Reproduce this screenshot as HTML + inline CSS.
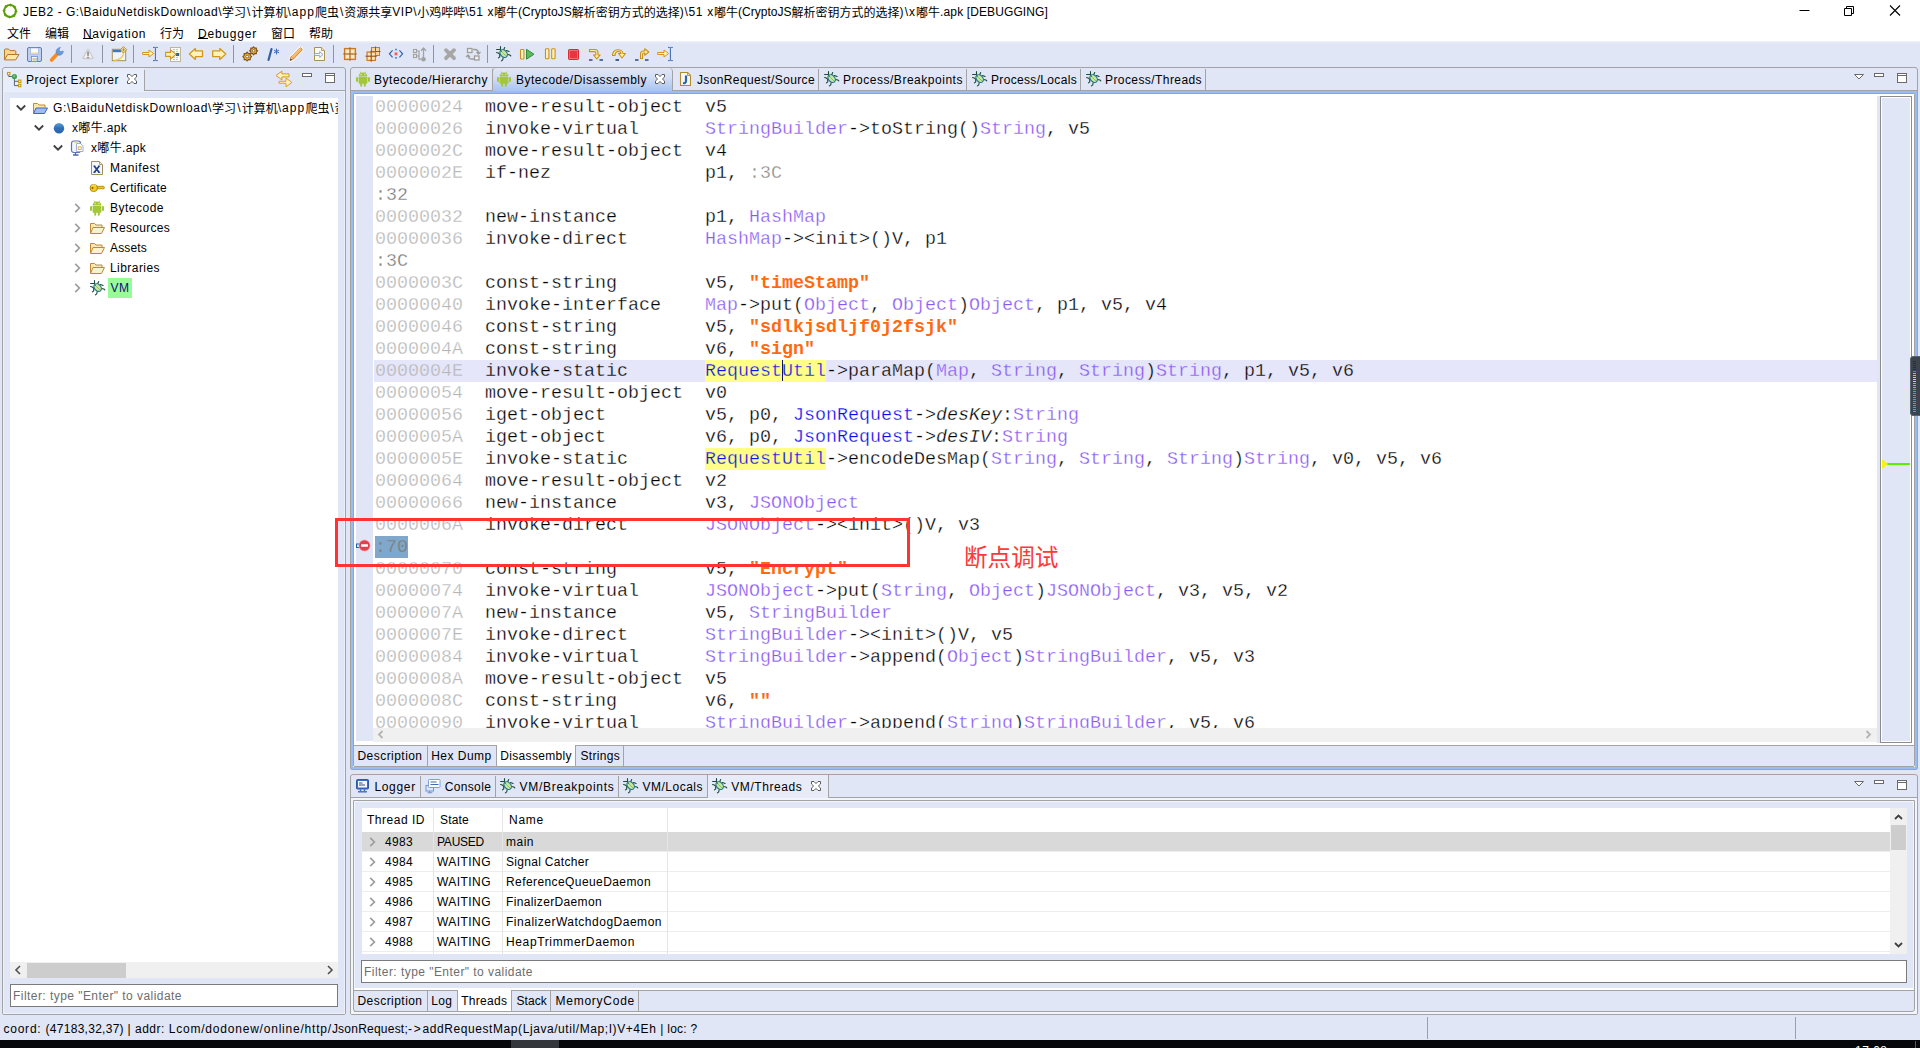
<!DOCTYPE html>
<html lang="zh"><head><meta charset="utf-8"><title>JEB2</title>
<style>
html,body{margin:0;padding:0;}
body{width:1920px;height:1048px;overflow:hidden;position:relative;background:#E1E6F6;font-family:"Liberation Sans","Noto Sans CJK SC",sans-serif;font-size:12px;color:#000;}
.a{position:absolute;}
.t{position:absolute;white-space:pre;line-height:20px;height:20px;}
.ic{position:absolute;width:16px;height:16px;overflow:visible;}
.sep{position:absolute;top:45px;width:1px;height:18px;background:#8F94A3;}
.code{position:absolute;white-space:pre;font-family:"Liberation Mono","Noto Sans CJK SC",monospace;font-size:18.333px;line-height:22px;height:22px;left:0;}
.ad{color:#B6B6B6;}
.lb{color:#787878;}
.cl{color:#8858F4;}
.st{color:#FF6A10;font-weight:bold;}
.bl{color:#0808F0;}
.it{font-style:italic;}
.hl{background:#FFFF88;color:#1010F0;padding-top:1px;}
.tabb{position:absolute;top:68px;height:22px;border-right:1px solid #A3A3A3;box-sizing:border-box;}
.lb2{color:#8A8A8A;}
.sel{background:#7FA8CC;color:#7C7C76;display:inline-block;height:22px;margin-top:-2px;padding-top:1px;box-sizing:border-box;}
.caret{display:inline-block;width:1px;margin-right:-1px;height:21px;vertical-align:top;background:#101040;}
.code{-webkit-text-stroke:.3px #fff;}
.code.cur{-webkit-text-stroke-color:#E6E6FA;}
.code .hl{-webkit-text-stroke-color:#FFFF88;}
.code .sel{-webkit-text-stroke-color:#7FA8CC;}
.code .st{-webkit-text-stroke:0;}

</style></head><body>
<div class="a" style="left:0;top:0;width:1920px;height:41px;background:#fff"></div>
<svg class="ic" style="left:2px;top:3px;width:16px;height:16px" viewBox="0 0 16 16"><circle cx="8" cy="8" r="5.900" fill="none" stroke="#5A9E0A" stroke-width="2"/><path d="M8 .8l1.200 2.400M15.200 8l-2.400 1.200M8 15.200L6.800 12.800M.8 8l2.400-1.200M2.900 2.900l2.500.9M13.100 2.900l-.9 2.500M13.100 13.100l-2.500-.9M2.900 13.100l.9-2.500" stroke="#5A9E0A" stroke-width="1.800"/></svg>
<span id="t0" class="t " style="left:23px;top:2px;font-size:12px;color:#000;letter-spacing:0.524px;">JEB2 - G:\BaiduNetdiskDownload\</span><span id="t1" class="t " style="left:222px;top:3px;font-size:12px;color:#000;">学习</span><span id="t2" class="t " style="left:246px;top:2px;font-size:12px;color:#000;padding-left:1.078px;">\</span><span id="t3" class="t " style="left:251.5px;top:3px;font-size:12px;color:#000;">计算机</span><span id="t4" class="t " style="left:287.5px;top:2px;font-size:12px;color:#000;letter-spacing:1.035px;">\app</span><span id="t5" class="t " style="left:315px;top:3px;font-size:12px;color:#000;">爬虫</span><span id="t6" class="t " style="left:339px;top:2px;font-size:12px;color:#000;padding-left:0.978px;">\</span><span id="t7" class="t " style="left:344.3px;top:3px;font-size:12px;color:#000;">资源共享</span><span id="t8" class="t " style="left:392.3px;top:2px;font-size:12px;color:#000;letter-spacing:0.553px;">VIP\</span><span id="t9" class="t " style="left:417.2px;top:3px;font-size:12px;color:#000;">小鸡哔哔</span><span id="t10" class="t " style="left:465.2px;top:2px;font-size:12px;color:#000;letter-spacing:0.557px;">\51 x</span><span id="t11" class="t " style="left:494px;top:3px;font-size:12px;color:#000;">嘟牛</span><span id="t12" class="t " style="left:518px;top:2px;font-size:12px;color:#000;letter-spacing:0.040px;">(CryptoJS</span><span id="t13" class="t " style="left:571.7px;top:3px;font-size:12px;color:#000;">解析密钥方式的选择</span><span id="t14" class="t " style="left:679.7px;top:2px;font-size:12px;color:#000;letter-spacing:0.697px;">)\51 x</span><span id="t15" class="t " style="left:713.9px;top:3px;font-size:12px;color:#000;">嘟牛</span><span id="t16" class="t " style="left:737.9px;top:2px;font-size:12px;color:#000;letter-spacing:0.040px;">(CryptoJS</span><span id="t17" class="t " style="left:791.6px;top:3px;font-size:12px;color:#000;">解析密钥方式的选择</span><span id="t18" class="t " style="left:899.6px;top:2px;font-size:12px;color:#000;letter-spacing:1.052px;">)\x</span><span id="t19" class="t " style="left:916.1px;top:3px;font-size:12px;color:#000;">嘟牛</span><span id="t20" class="t " style="left:940.1px;top:2px;font-size:12px;color:#000;letter-spacing:0.117px;">.apk [DEBUGGING]</span>
<svg class="a" style="left:1780px;top:0;width:140px;height:22px" viewBox="0 0 140 22"><path d="M19.500 10.500h10" stroke="#000" stroke-width="1"/><path d="M64.500 8.500h7v7h-7zM66.500 8.500v-2h7v7h-2" fill="none" stroke="#000" stroke-width="1"/><path d="M110 5.500l10 10M120 5.500l-10 10" stroke="#000" stroke-width="1.100"/></svg>
<span id="t21" class="t " style="left:7px;top:24px;font-size:12px;color:#000;letter-spacing:-0.008px;">文件</span>
<span id="t22" class="t " style="left:45px;top:24px;font-size:12px;color:#000;letter-spacing:-0.008px;">编辑</span>
<span id="t23" class="t " style="left:83px;top:23.5px;font-size:12px;color:#000;letter-spacing:0.630px;">Navigation</span>
<span id="t24" class="t " style="left:160px;top:24px;font-size:12px;color:#000;letter-spacing:-0.008px;">行为</span>
<span id="t25" class="t " style="left:198px;top:23.5px;font-size:12px;color:#000;letter-spacing:0.785px;">Debugger</span>
<span id="t26" class="t " style="left:271px;top:24px;font-size:12px;color:#000;letter-spacing:-0.008px;">窗口</span>
<span id="t27" class="t " style="left:309px;top:24px;font-size:12px;color:#000;letter-spacing:-0.008px;">帮助</span>
<div class="a" style="left:83px;top:38px;width:10px;height:1px;background:#000"></div>
<div class="a" style="left:198px;top:38px;width:10px;height:1px;background:#000"></div>
<div class="a" style="left:0;top:41px;width:1920px;height:27px;background:linear-gradient(#F4F6FC 0,#E1E6F6 2px)"></div>
<svg class="ic" style="left:3px;top:46px;width:16px;height:16px" viewBox="0 0 16 16"><path d="M1.500 13.500V4c0-.6.400-1 1-1h3l1.500 1.600h4.800c.6 0 1 .4 1 1v2.600" fill="#F7D78C" stroke="#B5772B"/><path d="M1.500 13.900L4.600 8.500H16l-3.400 5.400z" fill="#FBE6AE" stroke="#B5772B" stroke-linejoin="round"/></svg>
<svg class="ic" style="left:26px;top:46px;width:16px;height:16px" viewBox="0 0 16 16"><rect x="1.500" y="1.500" width="14" height="14" rx="1.500" fill="#BDD0EE" stroke="#5C7FB8"/><rect x="4.500" y="2" width="8" height="6" fill="#F8FAFD" stroke="#8FA8D4" stroke-width=".6"/><rect x="4.800" y="6.600" width="7.400" height="1.200" fill="#EBD3A0"/><rect x="5.500" y="10.500" width="6" height="5" fill="#F4F7FC" stroke="#6E8FC8" stroke-width=".8"/><rect x="6.500" y="12" width="2.600" height="2.600" fill="#E6C888"/><rect x="9.600" y="12" width="1" height="2.600" fill="#7E9ED2"/></svg>
<svg class="ic" style="left:49px;top:46px;width:16px;height:16px" viewBox="0 0 16 16"><path d="M2.600 14L8.600 7.600" stroke="#F98A1C" stroke-width="3.600" stroke-linecap="round"/><path d="M7.400 7.200c-1-2.400.6-5.400 4-5.800l-1.500 2.500 1.400 1.800 2.900-.7c.3 2.900-2.500 4.900-4.900 4z" fill="#6A9AD4" stroke="#4E82C4" stroke-width=".6"/></svg>
<svg class="ic" style="left:80px;top:46px;width:16px;height:16px" viewBox="0 0 16 16"><path d="M8 4L12.600 12H3.400z" fill="#EFEFEF" stroke="#CDCDCD" stroke-width="2.400" stroke-linejoin="round"/><path d="M8 4.300L12.300 11.800H3.700z" fill="#EFEFEF"/><rect x="7.200" y="5.600" width="1.700" height="4.200" fill="#8E8E8E"/><rect x="7.200" y="10.800" width="1.700" height="1.600" fill="#8E8E8E"/></svg>
<svg class="ic" style="left:111px;top:46px;width:16px;height:16px" viewBox="0 0 16 16"><rect x="1.300" y="3.300" width="13.400" height="11.400" fill="#EEF5FD" stroke="#A8915A"/><rect x="1.800" y="3.800" width="8.500" height="2.400" fill="#3F78C8"/><path d="M3 14.300C9 14.300 12.500 11 12.500 6.500" stroke="#F2C84B" stroke-width="1.300" fill="none"/><path d="M12.500 .6L15.600 3.800 12.500 7 9.400 3.800z" fill="#FDEBA8" stroke="#B8860B" stroke-width=".9" stroke-linejoin="round"/><path d="M12.500 2.200v3.200M10.900 3.800h3.200" stroke="#B8860B" stroke-width=".8"/></svg>
<svg class="ic" style="left:142px;top:46px;width:16px;height:16px" viewBox="0 0 16 16"><path d="M.6 6.500H7V4L11.600 7.500 7 11V8.500H.6z" fill="#FFF4C4" stroke="#D4951E" stroke-width="1" stroke-linejoin="round"/><path d="M11 1.400H12.600Q13.400 1.400 13.400 2.400V13.600Q13.400 14.600 12.600 14.600H11M15.800 1.400H14.200Q13.400 1.400 13.400 2.400M15.800 14.600H14.200Q13.400 14.600 13.400 13.600" stroke="#3A66B0" stroke-width="1" fill="none"/></svg>
<svg class="ic" style="left:165px;top:46px;width:16px;height:16px" viewBox="0 0 16 16"><rect x="5.500" y="1.500" width="10" height="14" fill="#FBFBF8" stroke="#BDB89C"/><path d="M8 3.500h6M8 5.500h6M8 11.500h6M8 13.500h6" stroke="#B4C6E4" stroke-width="1" stroke-dasharray="2 1"/><rect x="11" y="7" width="3.200" height="3" fill="#2F5FA8"/><path d="M.6 6.400H5.500V3.800L11 8.400 5.500 13V10.400H.6z" fill="#FFF0B0" stroke="#D4951E" stroke-width="1.100" stroke-linejoin="round"/></svg>
<svg class="ic" style="left:188px;top:46px;width:16px;height:16px" viewBox="0 0 16 16"><path d="M1.400 8L7.400 2.600V4.900H14.500V10.600H7.400V13.400z" fill="#FFF3B8" stroke="#D4951E" stroke-width="1.300" stroke-linejoin="round"/></svg>
<svg class="ic" style="left:211px;top:46px;width:16px;height:16px" viewBox="0 0 16 16"><path d="M14.800 8L8.800 2.600V4.900H1.700V10.600H8.800V13.400z" fill="#FFF3B8" stroke="#D4951E" stroke-width="1.300" stroke-linejoin="round"/></svg>
<svg class="ic" style="left:242px;top:46px;width:16px;height:16px" viewBox="0 0 16 16"><polygon points="9.60,10.60 8.13,11.81 8.31,13.71 6.41,13.53 5.20,15.00 3.99,13.53 2.09,13.71 2.27,11.81 0.80,10.60 2.27,9.39 2.09,7.49 3.99,7.67 5.20,6.20 6.41,7.67 8.31,7.49 8.13,9.39" fill="#EDBA42" stroke="#7E4E14" stroke-width="1.100" stroke-linejoin="round"/><circle cx="5.2" cy="10.6" r="1.408" fill="#FFFFFF" stroke="#7E4E14" stroke-width=".8"/><polygon points="15.60,4.80 14.26,5.90 14.43,7.63 12.70,7.46 11.60,8.80 10.50,7.46 8.77,7.63 8.94,5.90 7.60,4.80 8.94,3.70 8.77,1.97 10.50,2.14 11.60,0.80 12.70,2.14 14.43,1.97 14.26,3.70" fill="#EDBA42" stroke="#7E4E14" stroke-width="1.100" stroke-linejoin="round"/><circle cx="11.6" cy="4.8" r="1.28" fill="#FFFFFF" stroke="#7E4E14" stroke-width=".8"/></svg>
<svg class="ic" style="left:265px;top:46px;width:16px;height:16px" viewBox="0 0 16 16"><path d="M3.500 14L6.500 3" stroke="#34609E" stroke-width="2.200" stroke-linecap="round"/><path d="M11.500 2.600v5.800M9 4.100l5 2.800M14 4.100L9 6.900" stroke="#3A6AB8" stroke-width="1"/></svg>
<svg class="ic" style="left:288px;top:46px;width:16px;height:16px" viewBox="0 0 16 16"><path d="M2 14.500l1.200-3.800L11.800 2c.8-.8 3 1.200 2.200 2.200L5.500 13z" fill="#fff" stroke="#fff" stroke-width="2.600" stroke-linejoin="round"/><path d="M2 14.500l1.200-3.800L11.800 2c.8-.8 3 1.200 2.200 2.200L5.500 13z" fill="#F6B568" stroke="#C07A2A" stroke-width=".9" stroke-linejoin="round"/><path d="M4 10.600L12.400 2.200" stroke="#FAD9A8" stroke-width="1"/><path d="M2 14.500l1.200-3.800 2.300 2.300z" fill="#E8D2B0" stroke="#C07A2A" stroke-width=".5"/><path d="M2 14.500l.7-2 1.300 1.300z" fill="#1B2A6B"/></svg>
<svg class="ic" style="left:311px;top:46px;width:16px;height:16px" viewBox="0 0 16 16"><path d="M3.5 1.5h7l3 3v10h-10z" fill="#FBFAF2" stroke="#A8904E" stroke-linejoin="round"/><path d="M10.5 1.5v3h3" fill="#F0E7C0" stroke="#A8904E" stroke-width=".8"/><path d="M3.5 7.5h5.2V5.6L12 8.5 8.700 11.400V9.500H3.500z" fill="#F3F6FB" stroke="#8AA2C8" stroke-width=".9" stroke-linejoin="round"/></svg>
<svg class="ic" style="left:342px;top:46px;width:16px;height:16px" viewBox="0 0 16 16"><rect x="2.500" y="2.500" width="11" height="11" fill="#F1C88C" stroke="#C77B2B" stroke-width="1.200"/><rect x="4" y="4" width="3" height="3" fill="#FBEBC8"/><rect x="9" y="4" width="3" height="3" fill="#FBEBC8"/><rect x="4" y="9" width="3" height="3" fill="#FBEBC8"/><rect x="9" y="9" width="3" height="3" fill="#FBEBC8"/><path d="M8 1.200v13.600M1.200 8h13.600" stroke="#9A5A24" stroke-width=".9"/></svg>
<svg class="ic" style="left:365px;top:46px;width:16px;height:16px" viewBox="0 0 16 16"><rect x="6.500" y="1.500" width="8" height="8" fill="#F5D6A2" stroke="#C77B2B" stroke-width="1"/><path d="M10.500 .5v10M5.500 5.500h10" stroke="#8E4A1C" stroke-width=".9"/><rect x="2" y="6" width="8.500" height="8.500" fill="#F1C88C" stroke="#C77B2B" stroke-width="1.100"/><rect x="3.200" y="7.200" width="2.400" height="2.400" fill="#FBEBC8"/><rect x="7" y="7.200" width="2.400" height="2.400" fill="#FBEBC8"/><rect x="3.200" y="11" width="2.400" height="2.400" fill="#FBEBC8"/><rect x="7" y="11" width="2.400" height="2.400" fill="#FBEBC8"/><path d="M6.200 4.500v11.200M.5 10.200h11.300" stroke="#8E4A1C" stroke-width="1"/></svg>
<svg class="ic" style="left:388px;top:46px;width:16px;height:16px" viewBox="0 0 16 16"><path d="M4.600 4.300L1.400 7.800l3.200 3.500M11.400 4.300l3.200 3.500-3.200 3.500" fill="none" stroke="#2F64B4" stroke-width="1.200"/><rect x="6.600" y="6.400" width="2.800" height="2.800" fill="#EE5A5A" stroke="#F7B0B0" stroke-width=".5"/><path d="M8 2.300l1.400 2H6.600zM8 13.300l1.400-2H6.600z" fill="#2E7FD0"/></svg>
<svg class="ic" style="left:411px;top:46px;width:16px;height:16px" viewBox="0 0 16 16"><path d="M12.500 12V2.200M10 4.800l2.500-2.800L15 4.800" fill="none" stroke="#A2A2A2" stroke-width="1.300"/><circle cx="12.500" cy="13.200" r="2.300" fill="#A2A2A2"/><rect x="2.500" y="3.500" width="3" height="3" fill="#F2F2F2" stroke="#A2A2A2" stroke-width="1.200"/><rect x="2.500" y="8.500" width="3" height="3" fill="#F2F2F2" stroke="#A2A2A2" stroke-width="1.200"/><path d="M5.500 5h2.500v8.200h2.500M5.500 10h2.500" fill="none" stroke="#A2A2A2" stroke-width="1.200"/></svg>
<svg class="ic" style="left:442px;top:46px;width:16px;height:16px" viewBox="0 0 16 16"><path d="M4 4.200l8 8M12 4.200l-8 8" stroke="#A6A6A6" stroke-width="3.800" stroke-linecap="round"/></svg>
<svg class="ic" style="left:465px;top:46px;width:16px;height:16px" viewBox="0 0 16 16"><rect x="2.500" y="2.500" width="4.500" height="4" fill="#F0F0F0" stroke="#9E9E9E" stroke-width="1.300"/><rect x="9.500" y="10" width="4.500" height="4" fill="#F0F0F0" stroke="#9E9E9E" stroke-width="1.300"/><path d="M8 3.500h2c2.200 0 3.500 1.600 3.500 4M11.500 6l2 2 2-2M9 13H6.500C4.300 13 3 11.400 3 9M1 11l2-2 2 2" fill="none" stroke="#9E9E9E" stroke-width="1.300"/></svg>
<svg class="ic" style="left:496px;top:46px;width:16px;height:16px" viewBox="0 0 16 16"><g stroke="#1E4A3A" stroke-width="1.100" fill="none" stroke-linecap="round"><path d="M4.500 .6v3.400M8.700 1.600L7.700 3.800M.6 3.500h3.400M.6 6.500l1.600.5 1.400 1M3.700 8.200v2.800l-1.300.9M10.500 4.500l2.600 1M11.500 8.500l2.400.5.900.9M7.200 11.500l-.5 2.400-1.300 1"/></g><ellipse cx="7.600" cy="7.600" rx="3.200" ry="4.300" transform="rotate(-42 7.600 7.600)" fill="#C6E79C" stroke="#1F6F8C" stroke-width="1.100"/><path d="M6.200 6.200l3.800 3.800" stroke="#7DB860" stroke-width=".8"/><circle cx="5.400" cy="5.200" r=".7" fill="#2E8B2E"/></svg>
<svg class="ic" style="left:519px;top:46px;width:16px;height:16px" viewBox="0 0 16 16"><rect x="1.500" y="3.500" width="3.400" height="9.500" rx=".8" fill="#FFF4C0" stroke="#C8901A" stroke-width="1.100"/><path d="M7.500 3.300V13.200L15 8.250z" fill="#5DBB5B" stroke="#2F8F3E" stroke-width="1" stroke-linejoin="round"/></svg>
<svg class="ic" style="left:542px;top:46px;width:16px;height:16px" viewBox="0 0 16 16"><rect x="3.500" y="2.800" width="3.400" height="10" rx=".8" fill="#FFF4C0" stroke="#C8901A" stroke-width="1.100"/><rect x="9.700" y="2.800" width="3.400" height="10" rx=".8" fill="#FFF4C0" stroke="#C8901A" stroke-width="1.100"/></svg>
<svg class="ic" style="left:565px;top:46px;width:16px;height:16px" viewBox="0 0 16 16"><rect x="3.500" y="3.500" width="10" height="10" rx=".8" fill="#EB3440" stroke="#D92A34" stroke-width="1"/><rect x="4.500" y="4.500" width="8" height="8" fill="none" stroke="#F2747C" stroke-width=".9"/></svg>
<svg class="ic" style="left:588px;top:46px;width:16px;height:16px" viewBox="0 0 16 16"><path d="M1.500 3.500h5.500c2 0 3 1 3 3V9h2.200L8.800 12.800 5.500 9h2.300V6.800c0-.8-.4-1.200-1.200-1.200H1.500z" fill="#FFF0A8" stroke="#C8901A" stroke-width="1.100" stroke-linejoin="round"/><path d="M1 14h3.500M11.500 14H15" stroke="#2A4A80" stroke-width="1.700"/></svg>
<svg class="ic" style="left:611px;top:46px;width:16px;height:16px" viewBox="0 0 16 16"><path d="M1.500 9.500C1.500 3 11 1.500 12 7.500h2.500L11 12 7.500 7.500H10c-.8-3.200-6-2.600-6 2z" fill="#FFF0A8" stroke="#C8901A" stroke-width="1.100" stroke-linejoin="round"/><path d="M4.500 14H8" stroke="#2A4A80" stroke-width="1.700"/></svg>
<svg class="ic" style="left:634px;top:46px;width:16px;height:16px" viewBox="0 0 16 16"><path d="M6.500 12.500V8c0-2 1-3 3-3h1.200V2.800L14.800 6l-4.100 3.200V7H9.700C9 7 8.600 7.400 8.600 8.200v4.300z" fill="#FFF0A8" stroke="#C8901A" stroke-width="1.100" stroke-linejoin="round"/><path d="M1 14h3.500M11 14h3.500" stroke="#2A4A80" stroke-width="1.700"/></svg>
<svg class="ic" style="left:657px;top:46px;width:16px;height:16px" viewBox="0 0 16 16"><path d="M.6 6.500H7V4L11.600 7.500 7 11V8.500H.6z" fill="#FFF4C4" stroke="#D4951E" stroke-width="1" stroke-linejoin="round"/><path d="M11 1.400H12.600Q13.400 1.400 13.400 2.400V13.600Q13.400 14.600 12.600 14.600H11M15.800 1.400H14.200Q13.400 1.400 13.400 2.400M15.800 14.600H14.200Q13.400 14.600 13.400 13.600" stroke="#3A66B0" stroke-width="1" fill="none"/></svg>
<div class="sep" style="left:71px"></div>
<div class="sep" style="left:102px"></div>
<div class="sep" style="left:133px"></div>
<div class="sep" style="left:233px"></div>
<div class="sep" style="left:333px"></div>
<div class="sep" style="left:433px"></div>
<div class="sep" style="left:487px"></div>
<div class="a" style="left:2px;top:67px;width:344px;height:948px;border:1px solid #A3A3A3;border-radius:3px 3px 2px 2px;box-sizing:border-box;background:#E1E6F6"></div>
<div class="a" style="left:144px;top:90px;width:201px;height:1px;background:#A3A3A3"></div>
<div class="a" style="left:144px;top:70px;width:1px;height:21px;background:#A3A3A3"></div>
<div class="a" style="left:3px;top:91px;width:342px;height:923px;border:1px solid #EAF0FC;box-sizing:border-box"></div>
<div class="a" style="left:3px;top:68px;width:141px;height:23px;background:#E8EDFB;border-radius:3px 0 0 0"></div>
<svg class="ic" style="left:7px;top:71px;width:16px;height:16px" viewBox="0 0 16 16"><path d="M1.700 4v1.500h3.500M7.400 8v6.600h4M7.400 10.300h4" fill="none" stroke="#5C6578" stroke-width="1"/><rect x=".5" y="1.500" width="2.400" height="2.400" fill="#fff" stroke="#C8981E" stroke-width="1.100"/><circle cx="7.400" cy="5.500" r="2.600" fill="#45A055"/><circle cx="7.200" cy="5.200" r="1.100" fill="#7CC686"/><rect x="11.500" y="9.100" width="2.400" height="2.400" fill="#fff" stroke="#C8981E" stroke-width="1.100"/><rect x="11.500" y="13.300" width="2.400" height="2.400" fill="#fff" stroke="#C8981E" stroke-width="1.100"/></svg>
<span id="t28" class="t " style="left:26px;top:70px;font-size:12px;color:#000;letter-spacing:0.477px;">Project Explorer</span>
<svg class="a" style="left:127px;top:74px;width:10px;height:10px" viewBox="0 0 10 10"><path d="M.5 .5H3L5 2.600 7 .5H9.500V3L7.400 5 9.500 7V9.500H7L5 7.400 3 9.500H.5V7L2.600 5 .5 3Z" fill="#fff" stroke="#5C5C5C" stroke-width="1" stroke-linejoin="miter"/></svg>
<svg class="a" style="left:275px;top:70px;width:18px;height:18px" viewBox="0 0 18 18"><path d="M1 5.500L6.900 1.200V3.900H14V6.900H6.900V9.800Z" fill="#FFF3BE" stroke="#D29B1C" stroke-width="1" stroke-linejoin="round"/><path d="M17 12.400L11 8.100V11.300H4v2h7V16.800Z" fill="#FFF3BE" stroke="#D9A520" stroke-width="1" stroke-linejoin="round"/></svg>
<svg class="a" style="left:302px;top:73px;width:34px;height:12px" viewBox="0 0 34 12"><rect x=".5" y=".5" width="9" height="3" fill="#fff" stroke="#6A6A6A"/><rect x="23.500" y=".5" width="9" height="9" fill="#fff" stroke="#6A6A6A"/><path d="M23.500 2.500h9" stroke="#6A6A6A"/></svg>
<div class="a" style="left:10px;top:98px;width:328px;height:864px;background:#fff;overflow:hidden"></div>
<div class="a" style="left:10px;top:98px;width:328px;height:864px;overflow:hidden">
<svg class="ic" style="left:3px;top:2px;width:16px;height:16px" viewBox="0 0 16 16"><path d="M3.800 5.500L8 9.700l4.200-4.200" fill="none" stroke="#404040" stroke-width="1.800"/></svg>
<svg class="ic" style="left:22px;top:2px;width:16px;height:16px" viewBox="0 0 16 16"><path d="M1.500 13V3.500h4l1.500 1.500h6v2.500" fill="#FBE7B0" stroke="#C08A32"/><path d="M1.500 13.500l2.500-5.500h11.500l-3 5.500z" fill="#9DBCF0" stroke="#3E68B8" stroke-linejoin="round"/></svg>
<span id="t29" class="t " style="left:43px;top:0px;font-size:12px;color:#000;letter-spacing:0.649px;">G:\BaiduNetdiskDownload\</span><span id="t30" class="t " style="left:202px;top:1px;font-size:12px;color:#000;">学习</span><span id="t31" class="t " style="left:226px;top:0px;font-size:12px;color:#000;padding-left:1.178px;">\</span><span id="t32" class="t " style="left:231.7px;top:1px;font-size:12px;color:#000;">计算机</span><span id="t33" class="t " style="left:267.7px;top:0px;font-size:12px;color:#000;letter-spacing:1.085px;">\app</span><span id="t34" class="t " style="left:295.4px;top:1px;font-size:12px;color:#000;">爬虫</span><span id="t35" class="t " style="left:319.4px;top:0px;font-size:12px;color:#000;padding-left:0.928px;">\</span><span id="t36" class="t " style="left:324.6px;top:1px;font-size:12px;color:#000;">资源共享VIP</span>
<svg class="ic" style="left:21px;top:22px;width:16px;height:16px" viewBox="0 0 16 16"><path d="M3.800 5.500L8 9.700l4.200-4.200" fill="none" stroke="#404040" stroke-width="1.800"/></svg>
<svg class="ic" style="left:41px;top:22px;width:16px;height:16px" viewBox="0 0 16 16"><defs><linearGradient id="gb" x1="0" y1="0" x2="0" y2="1"><stop offset="0" stop-color="#5E9BD6"/><stop offset=".5" stop-color="#2F6FB8"/><stop offset="1" stop-color="#2A63A8"/></linearGradient></defs><circle cx="8" cy="8.300" r="5.200" fill="url(#gb)"/></svg>
<span id="t37" class="t " style="left:62px;top:20px;font-size:12px;color:#000;letter-spacing:0.330px;">x嘟牛.apk</span>
<svg class="ic" style="left:40px;top:42px;width:16px;height:16px" viewBox="0 0 16 16"><path d="M3.800 5.500L8 9.700l4.200-4.200" fill="none" stroke="#404040" stroke-width="1.800"/></svg>
<svg class="ic" style="left:60px;top:42px;width:16px;height:16px" viewBox="0 0 16 16"><rect x="1.500" y="1" width="9" height="11.500" rx="2.200" fill="#F2F5FB" stroke="#5B74B4" stroke-width="1.200"/><path d="M6.500 3.500h4l2.500 2.200v5.800h-6.500z" fill="#FFFFFF" stroke="#9AA6C8" stroke-width=".9" stroke-linejoin="round"/><rect x="8.200" y="6.800" width="3" height="2.600" fill="#fff" stroke="#C8A24A" stroke-width=".8"/><path d="M5.500 12.500v2M3 15h5.500" stroke="#4868B8" stroke-width="1.300"/><path d="M4 2h4" stroke="#E8C56A" stroke-width="1"/></svg>
<span id="t38" class="t " style="left:81px;top:40px;font-size:12px;color:#000;letter-spacing:0.330px;">x嘟牛.apk</span>
<svg class="ic" style="left:79px;top:62px;width:16px;height:16px" viewBox="0 0 16 16"><path d="M2.500 1.500h8l3 3v10h-11z" fill="#F3F6FD" stroke="#A08F58" stroke-linejoin="round"/><path d="M10.500 1.500v3h3" fill="#E9E2C2" stroke="#A08F58" stroke-width=".8"/><path d="M5.200 6l5 6.500M10.200 6l-5 6.500" stroke="#1F3F7A" stroke-width="1.700"/><path d="M4.300 6h2M9.200 6h2M4.300 12.500h2M9.200 12.500h2" stroke="#1F3F7A" stroke-width=".8"/></svg>
<span id="t39" class="t " style="left:100px;top:60px;font-size:12px;color:#000;letter-spacing:0.580px;">Manifest</span>
<svg class="ic" style="left:79px;top:82px;width:16px;height:16px" viewBox="0 0 16 16"><path d="M7.500 6.300h7.300l.7 1.400-1 1.300h-1.300l-.7-.9-.8.900h-1.200l-.6-.7-.8.700H7.500z" fill="#F0C419" stroke="#A88400" stroke-width=".8" stroke-linejoin="round"/><ellipse cx="4.700" cy="8" rx="3.700" ry="3.600" fill="#F5CC20" stroke="#A88400" stroke-width=".9"/><circle cx="3.500" cy="8" r="1" fill="#8A5A00"/><path d="M2.500 5.800c1.500-1.200 3.500-1 4.600.2" stroke="#FFF0A0" stroke-width=".8" fill="none"/></svg>
<span id="t40" class="t " style="left:100px;top:80px;font-size:12px;color:#000;letter-spacing:0.270px;">Certificate</span>
<svg class="ic" style="left:59px;top:102px;width:16px;height:16px" viewBox="0 0 16 16"><path d="M6.200 3.800L10.400 8l-4.200 4.200" fill="none" stroke="#9E9E9E" stroke-width="1.700"/></svg>
<svg class="ic" style="left:79px;top:102px;width:16px;height:16px" viewBox="0 0 16 16"><path d="M3.600 5.900h8.800v6c0 .5-.3.800-.8.800H4.400c-.5 0-.8-.3-.8-.8z" fill="#A4C639"/><path d="M3.600 5.400c0-2.500 2-3.800 4.400-3.800s4.400 1.300 4.400 3.800z" fill="#A4C639"/><path d="M5 .6l1.100 1.600M11 .6L9.900 2.200" stroke="#A4C639" stroke-width=".8"/><rect x="1" y="5.900" width="2" height="5" rx="1" fill="#A4C639"/><rect x="13" y="5.900" width="2" height="5" rx="1" fill="#A4C639"/><rect x="5.200" y="11.800" width="2" height="4" rx="1" fill="#A4C639"/><rect x="8.800" y="11.800" width="2" height="4" rx="1" fill="#A4C639"/><circle cx="6.100" cy="3.600" r=".55" fill="#fff"/><circle cx="9.900" cy="3.600" r=".55" fill="#fff"/></svg>
<span id="t41" class="t " style="left:100px;top:100px;font-size:12px;color:#000;letter-spacing:0.494px;">Bytecode</span>
<svg class="ic" style="left:59px;top:122px;width:16px;height:16px" viewBox="0 0 16 16"><path d="M6.200 3.800L10.400 8l-4.200 4.200" fill="none" stroke="#9E9E9E" stroke-width="1.700"/></svg>
<svg class="ic" style="left:79px;top:122px;width:16px;height:16px" viewBox="0 0 16 16"><path d="M1.500 13V3.500h4l1.500 1.500h6v2.500" fill="#FBE7B0" stroke="#C08A32"/><path d="M1.500 13.500l2.500-6h11.500l-3 6z" fill="#FDF1CF" stroke="#C08A32" stroke-linejoin="round"/></svg>
<span id="t42" class="t " style="left:100px;top:120px;font-size:12px;color:#000;letter-spacing:0.293px;">Resources</span>
<svg class="ic" style="left:59px;top:142px;width:16px;height:16px" viewBox="0 0 16 16"><path d="M6.200 3.800L10.400 8l-4.200 4.200" fill="none" stroke="#9E9E9E" stroke-width="1.700"/></svg>
<svg class="ic" style="left:79px;top:142px;width:16px;height:16px" viewBox="0 0 16 16"><path d="M1.500 13V3.500h4l1.500 1.500h6v2.500" fill="#FBE7B0" stroke="#C08A32"/><path d="M1.500 13.500l2.500-6h11.500l-3 6z" fill="#FDF1CF" stroke="#C08A32" stroke-linejoin="round"/></svg>
<span id="t43" class="t " style="left:100px;top:140px;font-size:12px;color:#000;letter-spacing:0.164px;">Assets</span>
<svg class="ic" style="left:59px;top:162px;width:16px;height:16px" viewBox="0 0 16 16"><path d="M6.200 3.800L10.400 8l-4.200 4.200" fill="none" stroke="#9E9E9E" stroke-width="1.700"/></svg>
<svg class="ic" style="left:79px;top:162px;width:16px;height:16px" viewBox="0 0 16 16"><path d="M1.500 13V3.500h4l1.500 1.500h6v2.500" fill="#FBE7B0" stroke="#C08A32"/><path d="M1.500 13.500l2.500-6h11.500l-3 6z" fill="#FDF1CF" stroke="#C08A32" stroke-linejoin="round"/></svg>
<span id="t44" class="t " style="left:100px;top:160px;font-size:12px;color:#000;letter-spacing:0.441px;">Libraries</span>
<svg class="ic" style="left:59px;top:182px;width:16px;height:16px" viewBox="0 0 16 16"><path d="M6.200 3.800L10.400 8l-4.200 4.200" fill="none" stroke="#9E9E9E" stroke-width="1.700"/></svg>
<svg class="ic" style="left:80px;top:182px;width:16px;height:16px" viewBox="0 0 16 16"><g stroke="#1E4A3A" stroke-width="1.100" fill="none" stroke-linecap="round"><path d="M4.500 .6v3.400M8.700 1.600L7.700 3.800M.6 3.500h3.400M.6 6.500l1.600.5 1.400 1M3.700 8.200v2.800l-1.300.9M10.500 4.500l2.600 1M11.500 8.500l2.400.5.900.9M7.200 11.500l-.5 2.400-1.300 1"/></g><ellipse cx="7.600" cy="7.600" rx="3.200" ry="4.300" transform="rotate(-42 7.600 7.600)" fill="#C6E79C" stroke="#1F6F8C" stroke-width="1.100"/><path d="M6.200 6.200l3.800 3.800" stroke="#7DB860" stroke-width=".8"/><circle cx="5.400" cy="5.200" r=".7" fill="#2E8B2E"/></svg>
<div class="a" style="left:98px;top:180px;width:24px;height:20px;background:#98FB98"></div>
<span id="t45" class="t " style="left:100.5px;top:180px;font-size:12px;color:#101080;letter-spacing:0.500px;">VM</span>
</div>
<div class="a" style="left:10px;top:962px;width:328px;height:16px;background:#F0F0F0"></div>
<div class="a" style="left:27px;top:963px;width:99px;height:15px;background:#CDCDCD"></div>
<svg class="a" style="left:10px;top:962px;width:328px;height:16px" viewBox="0 0 328 16"><path d="M10 4L6 8l4 4M318 4l4 4-4 4" fill="none" stroke="#505050" stroke-width="1.600"/></svg>
<div class="a" style="left:10px;top:984px;width:328px;height:23px;background:#fff;border:1px solid #7A7A7A;box-sizing:border-box"></div>
<span id="t46" class="t " style="left:13px;top:986px;font-size:12px;color:#6D6D6D;letter-spacing:0.450px;">Filter: type &quot;Enter&quot; to validate</span>
<div class="a" style="left:350px;top:67px;width:1568px;height:703px;border:1px solid #A3A3A3;border-radius:3px 3px 2px 2px;box-sizing:border-box;background:#E1E6F6"></div>
<div class="a" style="left:351px;top:90px;width:1566px;height:1px;background:#A3A3A3"></div>
<div class="a" style="left:351px;top:91px;width:1566px;height:678px;border:2px solid #98BCF8;box-sizing:border-box;background:#fff"></div>
<div class="a" style="left:353px;top:93px;width:1562px;height:674px;border:1px solid #A3A3A3;box-sizing:border-box;border-radius:0 0 2px 2px"></div>
<div class="a" style="left:492px;top:69px;width:1px;height:21px;background:#A3A3A3"></div>
<svg class="ic" style="left:355px;top:71px;width:16px;height:16px" viewBox="0 0 16 16"><path d="M3.600 5.900h8.800v6c0 .5-.3.800-.8.800H4.400c-.5 0-.8-.3-.8-.8z" fill="#A4C639"/><path d="M3.600 5.400c0-2.500 2-3.800 4.400-3.800s4.400 1.300 4.400 3.800z" fill="#A4C639"/><path d="M5 .6l1.100 1.600M11 .6L9.900 2.200" stroke="#A4C639" stroke-width=".8"/><rect x="1" y="5.900" width="2" height="5" rx="1" fill="#A4C639"/><rect x="13" y="5.900" width="2" height="5" rx="1" fill="#A4C639"/><rect x="5.200" y="11.800" width="2" height="4" rx="1" fill="#A4C639"/><rect x="8.800" y="11.800" width="2" height="4" rx="1" fill="#A4C639"/><circle cx="6.100" cy="3.600" r=".55" fill="#fff"/><circle cx="9.900" cy="3.600" r=".55" fill="#fff"/></svg>
<span id="t47" class="t " style="left:374px;top:70px;font-size:12px;color:#000;letter-spacing:0.516px;">Bytecode/Hierarchy</span>
<div class="a" style="left:492px;top:68px;width:181px;height:23px;background:linear-gradient(#E1E6F6 0%,#D3DEF5 40%,#A9C4F0 100%);border-left:1px solid #A3A3A3;border-right:1px solid #A3A3A3;box-sizing:border-box;border-radius:4px 4px 0 0"></div>
<svg class="a" style="left:655px;top:74px;width:10px;height:10px" viewBox="0 0 10 10"><path d="M.5 .5H3L5 2.600 7 .5H9.500V3L7.400 5 9.500 7V9.500H7L5 7.400 3 9.500H.5V7L2.600 5 .5 3Z" fill="#fff" stroke="#5C5C5C" stroke-width="1" stroke-linejoin="miter"/></svg>
<svg class="ic" style="left:496px;top:71px;width:16px;height:16px" viewBox="0 0 16 16"><path d="M3.600 5.900h8.800v6c0 .5-.3.800-.8.800H4.400c-.5 0-.8-.3-.8-.8z" fill="#A4C639"/><path d="M3.600 5.400c0-2.500 2-3.800 4.400-3.800s4.400 1.300 4.400 3.800z" fill="#A4C639"/><path d="M5 .6l1.100 1.600M11 .6L9.900 2.200" stroke="#A4C639" stroke-width=".8"/><rect x="1" y="5.900" width="2" height="5" rx="1" fill="#A4C639"/><rect x="13" y="5.900" width="2" height="5" rx="1" fill="#A4C639"/><rect x="5.200" y="11.800" width="2" height="4" rx="1" fill="#A4C639"/><rect x="8.800" y="11.800" width="2" height="4" rx="1" fill="#A4C639"/><circle cx="6.100" cy="3.600" r=".55" fill="#fff"/><circle cx="9.900" cy="3.600" r=".55" fill="#fff"/></svg>
<span id="t48" class="t " style="left:516px;top:70px;font-size:12px;color:#000;letter-spacing:0.480px;">Bytecode/Disassembly</span>
<div class="a" style="left:818px;top:69px;width:1px;height:21px;background:#A3A3A3"></div>
<svg class="ic" style="left:677px;top:71px;width:16px;height:16px" viewBox="0 0 16 16"><path d="M3.500 1.500h7l3 3v10h-10z" fill="#F4F8FD" stroke="#B08A30" stroke-width="1.100" stroke-linejoin="round"/><path d="M10.500 1.500v3h3z" fill="#F2DFA8" stroke="#B08A30" stroke-width=".8" stroke-linejoin="round"/><path d="M9 4.500v5.600c0 1.700-1.100 2.400-2.900 1.800" fill="none" stroke="#2A66A8" stroke-width="2.200"/></svg>
<span id="t49" class="t " style="left:697px;top:70px;font-size:12px;color:#000;letter-spacing:0.366px;">JsonRequest/Source</span>
<div class="a" style="left:966px;top:69px;width:1px;height:21px;background:#A3A3A3"></div>
<svg class="ic" style="left:824px;top:71px;width:16px;height:16px" viewBox="0 0 16 16"><g stroke="#1E4A3A" stroke-width="1.100" fill="none" stroke-linecap="round"><path d="M4.500 .6v3.400M8.700 1.600L7.700 3.800M.6 3.500h3.400M.6 6.500l1.600.5 1.400 1M3.700 8.200v2.800l-1.300.9M10.500 4.500l2.600 1M11.500 8.500l2.400.5.900.9M7.200 11.500l-.5 2.400-1.300 1"/></g><ellipse cx="7.600" cy="7.600" rx="3.200" ry="4.300" transform="rotate(-42 7.600 7.600)" fill="#C6E79C" stroke="#1F6F8C" stroke-width="1.100"/><path d="M6.200 6.200l3.800 3.800" stroke="#7DB860" stroke-width=".8"/><circle cx="5.400" cy="5.200" r=".7" fill="#2E8B2E"/></svg>
<span id="t50" class="t " style="left:843px;top:70px;font-size:12px;color:#000;letter-spacing:0.523px;">Process/Breakpoints</span>
<div class="a" style="left:1080px;top:69px;width:1px;height:21px;background:#A3A3A3"></div>
<svg class="ic" style="left:972px;top:71px;width:16px;height:16px" viewBox="0 0 16 16"><g stroke="#1E4A3A" stroke-width="1.100" fill="none" stroke-linecap="round"><path d="M4.500 .6v3.400M8.700 1.600L7.700 3.800M.6 3.500h3.400M.6 6.500l1.600.5 1.400 1M3.700 8.200v2.800l-1.300.9M10.500 4.500l2.600 1M11.500 8.500l2.400.5.900.9M7.200 11.500l-.5 2.400-1.300 1"/></g><ellipse cx="7.600" cy="7.600" rx="3.200" ry="4.300" transform="rotate(-42 7.600 7.600)" fill="#C6E79C" stroke="#1F6F8C" stroke-width="1.100"/><path d="M6.200 6.200l3.800 3.800" stroke="#7DB860" stroke-width=".8"/><circle cx="5.400" cy="5.200" r=".7" fill="#2E8B2E"/></svg>
<span id="t51" class="t " style="left:991px;top:70px;font-size:12px;color:#000;letter-spacing:0.330px;">Process/Locals</span>
<div class="a" style="left:1205px;top:69px;width:1px;height:21px;background:#A3A3A3"></div>
<svg class="ic" style="left:1086px;top:71px;width:16px;height:16px" viewBox="0 0 16 16"><g stroke="#1E4A3A" stroke-width="1.100" fill="none" stroke-linecap="round"><path d="M4.500 .6v3.400M8.700 1.600L7.700 3.800M.6 3.500h3.400M.6 6.500l1.600.5 1.400 1M3.700 8.200v2.800l-1.300.9M10.500 4.500l2.600 1M11.500 8.500l2.400.5.900.9M7.200 11.500l-.5 2.400-1.300 1"/></g><ellipse cx="7.600" cy="7.600" rx="3.200" ry="4.300" transform="rotate(-42 7.600 7.600)" fill="#C6E79C" stroke="#1F6F8C" stroke-width="1.100"/><path d="M6.200 6.200l3.800 3.800" stroke="#7DB860" stroke-width=".8"/><circle cx="5.400" cy="5.200" r=".7" fill="#2E8B2E"/></svg>
<span id="t52" class="t " style="left:1105px;top:70px;font-size:12px;color:#000;letter-spacing:0.420px;">Process/Threads</span>
<svg class="a" style="left:1854px;top:73px;width:56px;height:12px" viewBox="0 0 56 12"><path d="M.5 1.500h9L5 6z" fill="#fff" stroke="#6A6A6A" stroke-linejoin="round"/><rect x="20.500" y=".5" width="9" height="3" fill="#fff" stroke="#6A6A6A"/><rect x="43.500" y=".5" width="9" height="9" fill="#fff" stroke="#6A6A6A"/><path d="M43.500 2.500h9" stroke="#6A6A6A"/></svg>
<div class="a" style="left:354px;top:94px;width:1560px;height:651px;background:#fff"></div>
<div class="a" style="left:356px;top:96px;width:17px;height:645px;background:#E0E6F6"></div>
<div class="a" style="left:374px;top:95px;width:1503px;height:633px;overflow:hidden;background:#fff">
<div class="code" style="top:2px;left:1px"><span class="ad">00000024</span>  move-result-object  v5</div>
<div class="code" style="top:24px;left:1px"><span class="ad">00000026</span>  invoke-virtual      <span class="cl">StringBuilder</span>-&gt;toString()<span class="cl">String</span>, v5</div>
<div class="code" style="top:46px;left:1px"><span class="ad">0000002C</span>  move-result-object  v4</div>
<div class="code" style="top:68px;left:1px"><span class="ad">0000002E</span>  if-nez              p1, <span class="lb2">:3C</span></div>
<div class="code" style="top:90px;left:1px"><span class="lb">:32</span></div>
<div class="code" style="top:112px;left:1px"><span class="ad">00000032</span>  new-instance        p1, <span class="cl">HashMap</span></div>
<div class="code" style="top:134px;left:1px"><span class="ad">00000036</span>  invoke-direct       <span class="cl">HashMap</span>-&gt;&lt;init&gt;()V, p1</div>
<div class="code" style="top:156px;left:1px"><span class="lb">:3C</span></div>
<div class="code" style="top:178px;left:1px"><span class="ad">0000003C</span>  const-string        v5, <span class="st">&quot;timeStamp&quot;</span></div>
<div class="code" style="top:200px;left:1px"><span class="ad">00000040</span>  invoke-interface    <span class="cl">Map</span>-&gt;put(<span class="cl">Object</span>, <span class="cl">Object</span>)<span class="cl">Object</span>, p1, v5, v4</div>
<div class="code" style="top:222px;left:1px"><span class="ad">00000046</span>  const-string        v5, <span class="st">&quot;sdlkjsdljf0j2fsjk&quot;</span></div>
<div class="code" style="top:244px;left:1px"><span class="ad">0000004A</span>  const-string        v6, <span class="st">&quot;sign&quot;</span></div>
<div class="a" style="left:0;top:265px;width:1503px;height:22px;background:#E6E6FA"></div>
<div class="code cur" style="top:266px;left:1px"><span class="ad">0000004E</span>  invoke-static       <span class="hl">RequestUtil</span>-&gt;paraMap(<span class="cl">Map</span>, <span class="cl">String</span>, <span class="cl">String</span>)<span class="cl">String</span>, p1, v5, v6</div>
<div class="code" style="top:288px;left:1px"><span class="ad">00000054</span>  move-result-object  v0</div>
<div class="code" style="top:310px;left:1px"><span class="ad">00000056</span>  iget-object         v5, p0, <span class="bl">JsonRequest</span>-&gt;<span class="it">desKey</span>:<span class="cl">String</span></div>
<div class="code" style="top:332px;left:1px"><span class="ad">0000005A</span>  iget-object         v6, p0, <span class="bl">JsonRequest</span>-&gt;<span class="it">desIV</span>:<span class="cl">String</span></div>
<div class="code" style="top:354px;left:1px"><span class="ad">0000005E</span>  invoke-static       <span class="hl">RequestUtil</span>-&gt;encodeDesMap(<span class="cl">String</span>, <span class="cl">String</span>, <span class="cl">String</span>)<span class="cl">String</span>, v0, v5, v6</div>
<div class="code" style="top:376px;left:1px"><span class="ad">00000064</span>  move-result-object  v2</div>
<div class="code" style="top:398px;left:1px"><span class="ad">00000066</span>  new-instance        v3, <span class="cl">JSONObject</span></div>
<div class="code" style="top:420px;left:1px"><span class="ad">0000006A</span>  invoke-direct       <span class="cl">JSONObject</span>-&gt;&lt;init&gt;()V, v3</div>
<div class="code" style="top:442px;left:1px"><span class="sel">:70</span></div>
<div class="code" style="top:464px;left:1px"><span class="ad">00000070</span>  const-string        v5, <span class="st">&quot;Encrypt&quot;</span></div>
<div class="code" style="top:486px;left:1px"><span class="ad">00000074</span>  invoke-virtual      <span class="cl">JSONObject</span>-&gt;put(<span class="cl">String</span>, <span class="cl">Object</span>)<span class="cl">JSONObject</span>, v3, v5, v2</div>
<div class="code" style="top:508px;left:1px"><span class="ad">0000007A</span>  new-instance        v5, <span class="cl">StringBuilder</span></div>
<div class="code" style="top:530px;left:1px"><span class="ad">0000007E</span>  invoke-direct       <span class="cl">StringBuilder</span>-&gt;&lt;init&gt;()V, v5</div>
<div class="code" style="top:552px;left:1px"><span class="ad">00000084</span>  invoke-virtual      <span class="cl">StringBuilder</span>-&gt;append(<span class="cl">Object</span>)<span class="cl">StringBuilder</span>, v5, v3</div>
<div class="code" style="top:574px;left:1px"><span class="ad">0000008A</span>  move-result-object  v5</div>
<div class="code" style="top:596px;left:1px"><span class="ad">0000008C</span>  const-string        v6, <span class="st">&quot;&quot;</span></div>
<div class="code" style="top:618px;left:1px"><span class="ad">00000090</span>  invoke-virtual      <span class="cl">StringBuilder</span>-&gt;append(<span class="cl">String</span>)<span class="cl">StringBuilder</span>, v5, v6</div>
<div class="a" style="left:408px;top:265px;width:1px;height:21px;background:#101070"></div>
</div>
<svg class="ic" style="left:356px;top:538px;width:16px;height:16px" viewBox="0 0 16 16"><rect x="0" y="5.500" width="3.500" height="4.500" fill="#1F5FA8"/><rect x="1" y="6.500" width="2" height="2.500" fill="#DDE8F8"/><circle cx="8.500" cy="7.500" r="5.600" fill="#E2404C"/><circle cx="8.500" cy="7.500" r="5.600" fill="none" stroke="#F5B0B4" stroke-width=".6"/><rect x="5" y="6.300" width="7" height="2.400" rx=".4" fill="#fff"/></svg>
<div class="a" style="left:373px;top:728px;width:1504px;height:14px;background:#F0F0F0"></div>
<svg class="a" style="left:374px;top:728px;width:1502px;height:15px" viewBox="0 0 1502 15"><path d="M8.500 3L5 6.500l3.500 3.500M1492.500 3l3.500 3.500-3.500 3.500" fill="none" stroke="#B4B4B4" stroke-width="1.800"/></svg>
<div class="a" style="left:1877px;top:96px;width:4px;height:647px;background:#E0E6F6"></div>
<div class="a" style="left:1880px;top:96px;width:32px;height:647px;background:#E1E6F6;border:1px solid #8C8C8C;box-shadow:inset 0 0 0 1px #fff;box-sizing:border-box"></div>
<div class="a" style="left:1883px;top:463px;width:27px;height:2px;background:#5CF000"></div>
<div class="a" style="left:1882px;top:459px;width:6px;height:10px;background:#F4F410;clip-path:polygon(0 0,100% 50%,0 100%)"></div>
<div class="a" style="left:1910px;top:356px;width:12px;height:60px;background:#3B444D;border:1px solid #59636E;border-radius:3px 0 0 3px;box-sizing:border-box"></div>
<div class="a" style="left:1913px;top:361px;width:3px;height:51px;background:repeating-linear-gradient(transparent 0,transparent 1px,#3B444D 1px,#3B444D 2px),linear-gradient(#2A2F36 0,#2A2F36 20%,#E8A33A 21%,#E8A33A 28%,#E6D23A 29%,#E6D23A 42%,#7CCB6A 43%,#7CCB6A 54%,#35A8E0 55%,#35A8E0 100%);background-blend-mode:normal"></div>
<div class="a" style="left:354px;top:745px;width:1560px;height:21px;border-top:1px solid #A3A3A3;background:#E1E6F6;box-sizing:border-box"></div>
<div class="a" style="left:427px;top:745px;width:1px;height:21px;background:#A3A3A3"></div>
<span id="t53" class="t " style="left:357.5px;top:746px;font-size:12px;color:#000;letter-spacing:0.452px;">Description</span>
<div class="a" style="left:496px;top:745px;width:1px;height:21px;background:#A3A3A3"></div>
<span id="t54" class="t " style="left:431.2px;top:746px;font-size:12px;color:#000;letter-spacing:0.477px;">Hex Dump</span>
<div class="a" style="left:496px;top:745px;width:80px;height:22px;background:#fff;border:1px solid #A3A3A3;border-top:none;box-sizing:border-box;border-radius:0 0 2px 2px"></div>
<span id="t55" class="t " style="left:500.3px;top:746px;font-size:12px;color:#000;letter-spacing:0.326px;">Disassembly</span>
<div class="a" style="left:623px;top:745px;width:1px;height:21px;background:#A3A3A3"></div>
<span id="t56" class="t " style="left:580.5px;top:746px;font-size:12px;color:#000;letter-spacing:0.306px;">Strings</span>
<div class="a" style="left:354px;top:766px;width:271px;height:1px;background:#A3A3A3"></div>
<div class="a" style="left:335px;top:518px;width:575px;height:49px;border:3px solid #FF3333;box-sizing:border-box"></div>
<span id="t57" class="t " style="left:964px;top:548px;font-size:23.6px;color:#FF3838;letter-spacing:0.031px;line-height:30px;height:30px;margin-top:-5px;">断点调试</span>
<div class="a" style="left:350px;top:774px;width:1568px;height:241px;border:1px solid #A3A3A3;border-radius:3px 3px 2px 2px;box-sizing:border-box;background:#E1E6F6"></div>
<div class="a" style="left:351px;top:797px;width:1566px;height:1px;background:#A3A3A3"></div>
<div class="a" style="left:351px;top:798px;width:1566px;height:216px;background:#F3F5FC"></div>
<div class="a" style="left:353px;top:800px;width:1562px;height:212px;border:1px solid #A3A3A3;border-radius:0 0 3px 3px;box-sizing:border-box;background:#E1E6F6"></div>
<div class="a" style="left:354px;top:801px;width:1560px;height:189px;border:1px solid #F3F5FC;border-bottom:2px solid #fff;box-sizing:border-box"></div>
<div class="a" style="left:420px;top:776px;width:1px;height:21px;background:#A3A3A3"></div>
<svg class="ic" style="left:355px;top:778px;width:16px;height:16px" viewBox="0 0 16 16"><rect x="1.500" y="1.500" width="12" height="9.500" rx="1" fill="#3A6BC0" stroke="#2F58A6"/><rect x="3" y="3" width="9" height="6.500" fill="#F4F8FE"/><path d="M4 5h3.500M4 7h6" stroke="#3A4E80" stroke-width="1"/><path d="M5.500 11.500v1.500M9.500 11.500v1.500" stroke="#3A6BC0" stroke-width="1.500"/><path d="M3 13.800h9" stroke="#3A6BC0" stroke-width="1.400"/></svg>
<span id="t58" class="t " style="left:374.4px;top:777px;font-size:12px;color:#000;letter-spacing:0.688px;">Logger</span>
<div class="a" style="left:495px;top:776px;width:1px;height:21px;background:#A3A3A3"></div>
<svg class="ic" style="left:425px;top:778px;width:16px;height:16px" viewBox="0 0 16 16"><rect x="1" y="7.500" width="7.500" height="5.500" fill="#DCE7F8" stroke="#6E93D2"/><path d="M4.800 13v1.500M2.500 14.800h4.800" stroke="#6E93D2" stroke-width="1.100"/><rect x="3.500" y="1.500" width="11.500" height="8" rx=".8" fill="#FFFFFF" stroke="#7EA0DA"/><path d="M5.500 4h6M5.500 6.500h8" stroke="#4A67B0" stroke-width="1.100"/></svg>
<span id="t59" class="t " style="left:444.7px;top:777px;font-size:12px;color:#000;letter-spacing:0.353px;">Console</span>
<div class="a" style="left:618px;top:776px;width:1px;height:21px;background:#A3A3A3"></div>
<svg class="ic" style="left:500px;top:778px;width:16px;height:16px" viewBox="0 0 16 16"><g stroke="#1E4A3A" stroke-width="1.100" fill="none" stroke-linecap="round"><path d="M4.500 .6v3.400M8.700 1.600L7.700 3.800M.6 3.500h3.400M.6 6.500l1.600.5 1.400 1M3.700 8.200v2.800l-1.300.9M10.500 4.500l2.600 1M11.500 8.500l2.400.5.900.9M7.200 11.500l-.5 2.400-1.300 1"/></g><ellipse cx="7.600" cy="7.600" rx="3.200" ry="4.300" transform="rotate(-42 7.600 7.600)" fill="#C6E79C" stroke="#1F6F8C" stroke-width="1.100"/><path d="M6.200 6.200l3.800 3.800" stroke="#7DB860" stroke-width=".8"/><circle cx="5.400" cy="5.200" r=".7" fill="#2E8B2E"/></svg>
<span id="t60" class="t " style="left:519.5px;top:777px;font-size:12px;color:#000;letter-spacing:0.735px;">VM/Breakpoints</span>
<div class="a" style="left:707px;top:776px;width:1px;height:21px;background:#A3A3A3"></div>
<svg class="ic" style="left:623px;top:778px;width:16px;height:16px" viewBox="0 0 16 16"><g stroke="#1E4A3A" stroke-width="1.100" fill="none" stroke-linecap="round"><path d="M4.500 .6v3.400M8.700 1.600L7.700 3.800M.6 3.500h3.400M.6 6.500l1.600.5 1.400 1M3.700 8.200v2.800l-1.300.9M10.500 4.500l2.600 1M11.500 8.500l2.400.5.900.9M7.200 11.500l-.5 2.400-1.300 1"/></g><ellipse cx="7.600" cy="7.600" rx="3.200" ry="4.300" transform="rotate(-42 7.600 7.600)" fill="#C6E79C" stroke="#1F6F8C" stroke-width="1.100"/><path d="M6.200 6.200l3.800 3.800" stroke="#7DB860" stroke-width=".8"/><circle cx="5.400" cy="5.200" r=".7" fill="#2E8B2E"/></svg>
<span id="t61" class="t " style="left:642.5px;top:777px;font-size:12px;color:#000;letter-spacing:0.497px;">VM/Locals</span>
<div class="a" style="left:707px;top:775px;width:122px;height:23px;background:#E8ECF9;border-left:1px solid #A3A3A3;border-right:1px solid #A3A3A3;box-sizing:border-box"></div>
<svg class="a" style="left:811px;top:781px;width:10px;height:10px" viewBox="0 0 10 10"><path d="M.5 .5H3L5 2.600 7 .5H9.500V3L7.400 5 9.500 7V9.500H7L5 7.400 3 9.500H.5V7L2.600 5 .5 3Z" fill="#fff" stroke="#5C5C5C" stroke-width="1" stroke-linejoin="miter"/></svg>
<svg class="ic" style="left:712px;top:778px;width:16px;height:16px" viewBox="0 0 16 16"><g stroke="#1E4A3A" stroke-width="1.100" fill="none" stroke-linecap="round"><path d="M4.500 .6v3.400M8.700 1.600L7.700 3.800M.6 3.500h3.400M.6 6.500l1.600.5 1.400 1M3.700 8.200v2.800l-1.300.9M10.500 4.500l2.600 1M11.500 8.500l2.400.5.900.9M7.200 11.500l-.5 2.400-1.300 1"/></g><ellipse cx="7.600" cy="7.600" rx="3.200" ry="4.300" transform="rotate(-42 7.600 7.600)" fill="#C6E79C" stroke="#1F6F8C" stroke-width="1.100"/><path d="M6.200 6.200l3.800 3.800" stroke="#7DB860" stroke-width=".8"/><circle cx="5.400" cy="5.200" r=".7" fill="#2E8B2E"/></svg>
<span id="t62" class="t " style="left:731.3px;top:777px;font-size:12px;color:#000;letter-spacing:0.564px;">VM/Threads</span>
<svg class="a" style="left:1854px;top:780px;width:56px;height:12px" viewBox="0 0 56 12"><path d="M.5 1.500h9L5 6z" fill="#fff" stroke="#6A6A6A" stroke-linejoin="round"/><rect x="20.500" y=".5" width="9" height="3" fill="#fff" stroke="#6A6A6A"/><rect x="43.500" y=".5" width="9" height="9" fill="#fff" stroke="#6A6A6A"/><path d="M43.500 2.500h9" stroke="#6A6A6A"/></svg>
<div class="a" style="left:362px;top:808px;width:1544px;height:146px;background:#fff"></div>
<div class="a" style="left:362px;top:832px;width:1528px;height:19px;background:#D9D9D9"></div>
<div class="a" style="left:362px;top:851px;width:1528px;height:1px;background:#EDEDED"></div>
<div class="a" style="left:362px;top:871px;width:1528px;height:1px;background:#EDEDED"></div>
<div class="a" style="left:362px;top:891px;width:1528px;height:1px;background:#EDEDED"></div>
<div class="a" style="left:362px;top:911px;width:1528px;height:1px;background:#EDEDED"></div>
<div class="a" style="left:362px;top:931px;width:1528px;height:1px;background:#EDEDED"></div>
<div class="a" style="left:362px;top:951px;width:1528px;height:1px;background:#EDEDED"></div>
<div class="a" style="left:433px;top:808px;width:1px;height:146px;background:#E6E6E6"></div>
<div class="a" style="left:502px;top:808px;width:1px;height:146px;background:#E6E6E6"></div>
<div class="a" style="left:667px;top:808px;width:1px;height:146px;background:#E6E6E6"></div>
<span id="t63" class="t " style="left:367px;top:810px;font-size:12px;color:#000;letter-spacing:0.516px;">Thread ID</span>
<span id="t64" class="t " style="left:440px;top:810px;font-size:12px;color:#000;letter-spacing:0.194px;">State</span>
<span id="t65" class="t " style="left:509px;top:810px;font-size:12px;color:#000;letter-spacing:0.746px;">Name</span>
<svg class="ic" style="left:364px;top:834px;width:16px;height:16px" viewBox="0 0 16 16"><path d="M6.200 3.800L10.400 8l-4.200 4.200" fill="none" stroke="#9E9E9E" stroke-width="1.700"/></svg>
<span id="t66" class="t " style="left:385px;top:832px;font-size:12px;color:#000;letter-spacing:0.324px;">4983</span>
<span id="t67" class="t " style="left:437px;top:832px;font-size:12px;color:#000;letter-spacing:-0.245px;">PAUSED</span>
<span id="t68" class="t " style="left:506px;top:832px;font-size:12px;color:#000;letter-spacing:0.496px;">main</span>
<svg class="ic" style="left:364px;top:854px;width:16px;height:16px" viewBox="0 0 16 16"><path d="M6.200 3.800L10.400 8l-4.200 4.200" fill="none" stroke="#9E9E9E" stroke-width="1.700"/></svg>
<span id="t69" class="t " style="left:385px;top:852px;font-size:12px;color:#000;letter-spacing:0.324px;">4984</span>
<span id="t70" class="t " style="left:437px;top:852px;font-size:12px;color:#000;letter-spacing:0.444px;">WAITING</span>
<span id="t71" class="t " style="left:506px;top:852px;font-size:12px;color:#000;letter-spacing:0.306px;">Signal Catcher</span>
<svg class="ic" style="left:364px;top:874px;width:16px;height:16px" viewBox="0 0 16 16"><path d="M6.200 3.800L10.400 8l-4.200 4.200" fill="none" stroke="#9E9E9E" stroke-width="1.700"/></svg>
<span id="t72" class="t " style="left:385px;top:872px;font-size:12px;color:#000;letter-spacing:0.324px;">4985</span>
<span id="t73" class="t " style="left:437px;top:872px;font-size:12px;color:#000;letter-spacing:0.444px;">WAITING</span>
<span id="t74" class="t " style="left:506px;top:872px;font-size:12px;color:#000;letter-spacing:0.412px;">ReferenceQueueDaemon</span>
<svg class="ic" style="left:364px;top:894px;width:16px;height:16px" viewBox="0 0 16 16"><path d="M6.200 3.800L10.400 8l-4.200 4.200" fill="none" stroke="#9E9E9E" stroke-width="1.700"/></svg>
<span id="t75" class="t " style="left:385px;top:892px;font-size:12px;color:#000;letter-spacing:0.324px;">4986</span>
<span id="t76" class="t " style="left:437px;top:892px;font-size:12px;color:#000;letter-spacing:0.444px;">WAITING</span>
<span id="t77" class="t " style="left:506px;top:892px;font-size:12px;color:#000;letter-spacing:0.353px;">FinalizerDaemon</span>
<svg class="ic" style="left:364px;top:914px;width:16px;height:16px" viewBox="0 0 16 16"><path d="M6.200 3.800L10.400 8l-4.200 4.200" fill="none" stroke="#9E9E9E" stroke-width="1.700"/></svg>
<span id="t78" class="t " style="left:385px;top:912px;font-size:12px;color:#000;letter-spacing:0.324px;">4987</span>
<span id="t79" class="t " style="left:437px;top:912px;font-size:12px;color:#000;letter-spacing:0.444px;">WAITING</span>
<span id="t80" class="t " style="left:506px;top:912px;font-size:12px;color:#000;letter-spacing:0.509px;">FinalizerWatchdogDaemon</span>
<svg class="ic" style="left:364px;top:934px;width:16px;height:16px" viewBox="0 0 16 16"><path d="M6.200 3.800L10.400 8l-4.200 4.200" fill="none" stroke="#9E9E9E" stroke-width="1.700"/></svg>
<span id="t81" class="t " style="left:385px;top:932px;font-size:12px;color:#000;letter-spacing:0.324px;">4988</span>
<span id="t82" class="t " style="left:437px;top:932px;font-size:12px;color:#000;letter-spacing:0.444px;">WAITING</span>
<span id="t83" class="t " style="left:506px;top:932px;font-size:12px;color:#000;letter-spacing:0.631px;">HeapTrimmerDaemon</span>
<div class="a" style="left:1890px;top:808px;width:17px;height:146px;background:#F0F0F0"></div>
<div class="a" style="left:1891px;top:825px;width:15px;height:25px;background:#CDCDCD"></div>
<svg class="a" style="left:1890px;top:808px;width:17px;height:146px" viewBox="0 0 17 146"><path d="M5 11l3.500-3.500L12 11M5 135l3.500 3.500L12 135" fill="none" stroke="#404040" stroke-width="1.800"/></svg>
<div class="a" style="left:361px;top:960px;width:1546px;height:23px;background:#fff;border:1px solid #7A7A7A;box-sizing:border-box"></div>
<span id="t84" class="t " style="left:364px;top:962px;font-size:12px;color:#6D6D6D;letter-spacing:0.450px;">Filter: type &quot;Enter&quot; to validate</span>
<div class="a" style="left:354px;top:990px;width:1560px;height:1px;background:#A3A3A3"></div>
<div class="a" style="left:427px;top:990px;width:1px;height:21px;background:#A3A3A3"></div>
<span id="t85" class="t " style="left:357.5px;top:991px;font-size:12px;color:#000;letter-spacing:0.452px;">Description</span>
<div class="a" style="left:457px;top:990px;width:1px;height:21px;background:#A3A3A3"></div>
<span id="t86" class="t " style="left:431.2px;top:991px;font-size:12px;color:#000;letter-spacing:0.323px;">Log</span>
<div class="a" style="left:457px;top:990px;width:55px;height:22px;background:#fff;border:1px solid #A3A3A3;border-top:none;box-sizing:border-box;border-radius:0 0 2px 2px"></div>
<span id="t87" class="t " style="left:461.2px;top:991px;font-size:12px;color:#000;letter-spacing:0.281px;">Threads</span>
<div class="a" style="left:550px;top:990px;width:1px;height:21px;background:#A3A3A3"></div>
<span id="t88" class="t " style="left:516.4px;top:991px;font-size:12px;color:#000;letter-spacing:0.097px;">Stack</span>
<div class="a" style="left:638px;top:990px;width:1px;height:21px;background:#A3A3A3"></div>
<span id="t89" class="t " style="left:555.5px;top:991px;font-size:12px;color:#000;letter-spacing:0.747px;">MemoryCode</span>
<div class="a" style="left:354px;top:1011px;width:285px;height:1px;background:#A3A3A3"></div>
<span id="t90" class="t " style="left:3.4px;top:1019px;font-size:12px;color:#000;letter-spacing:0.788px;">coord: </span><span id="t91" class="t " style="left:45.6px;top:1019px;font-size:12px;color:#000;letter-spacing:0.274px;">(47183,32,37) </span><span id="t92" class="t " style="left:127.5px;top:1019px;font-size:12px;color:#000;letter-spacing:0.514px;">| addr: </span><span id="t93" class="t " style="left:168.75px;top:1019px;font-size:12px;color:#000;letter-spacing:0.788px;">Lcom/dodonew/online/http/</span><span id="t94" class="t " style="left:331.9px;top:1019px;font-size:12px;color:#000;letter-spacing:0.226px;">JsonRequest;</span><span id="t95" class="t " style="left:408px;top:1019px;font-size:12px;color:#000;letter-spacing:1.742px;">-&gt;</span><span id="t96" class="t " style="left:422.5px;top:1019px;font-size:12px;color:#000;letter-spacing:0.577px;">addRequestMap(Ljava/util/Map;I)V+4Eh </span><span id="t97" class="t " style="left:660.3px;top:1019px;font-size:12px;color:#000;letter-spacing:0.257px;">| loc: ?</span>
<div class="a" style="left:1427px;top:1017px;width:1px;height:22px;background:#A0A0A0"></div>
<div class="a" style="left:1795px;top:1017px;width:1px;height:22px;background:#A0A0A0"></div>
<div class="a" style="left:0;top:1040px;width:1920px;height:8px;background:#06070A"></div>
<div class="a" style="left:511px;top:1040px;width:48px;height:8px;background:#33363A"></div>
<div class="a" style="left:1840px;top:1040px;width:60px;height:8px;overflow:hidden"><span class="a" style="left:15px;top:4.500px;color:#fff;font-size:12px;line-height:12px;letter-spacing:.5px">17:08</span></div>
<div class="a" style="left:1915px;top:1041px;width:1px;height:7px;background:#5A5A5A"></div>
</body></html>
